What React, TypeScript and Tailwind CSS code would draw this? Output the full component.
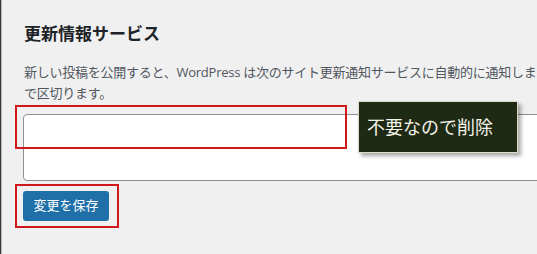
import React from "react";

export default function App() {
  const font = {
    fontFamily: '"Segoe UI", "Open Sans", "Noto Sans CJK JP", sans-serif',
  };
  return (
    <div
      className="relative w-[537px] h-[254px] overflow-hidden bg-[#f0f0f1] border-l border-[#3a3a3a]"
      style={font}
    >
      <div className="h-full border-l border-[#b8b8b8] pl-[22px] pt-[22px] flex flex-col items-start">
        <h2 className="h-[24px] leading-[24px] text-[17px] font-bold text-[#1d2327] whitespace-nowrap">
          更新情報サービス
        </h2>
        <div className="mt-[16px] text-[13px] leading-[21px] text-[#50575e] tracking-[-0.25px]">
          <p className="whitespace-nowrap">
            新しい投稿を公開すると、WordPress は次のサイト更新通知サービスに自動的に通知します。詳しくはドキュメンテーションの更新通知サービスを参照してください。複数の URL を入力する場合は改行
          </p>
          <p className="whitespace-nowrap">で区切ります。</p>
        </div>
        <div className="mt-[10px] h-[67px] w-[540px] -ml-[1px] bg-white border border-[#8c8f94] rounded-[4px]" />
        <button className="mt-[10px] -ml-[1px] h-[30px] w-[86px] rounded-[3px] bg-[#1f6fa8] text-white text-[13px] flex items-center justify-center">
          変更を保存
        </button>
      </div>

      {/* annotation overlays */}
      <div className="absolute left-[14px] top-[105px] w-[332px] h-[44px] border-2 border-[#d0171b]" />
      <div className="absolute left-[14px] top-[184px] w-[104px] h-[44px] border-2 border-[#d0171b]" />
      <div className="absolute left-[357px] top-[101px] w-[160px] h-[52px] bg-[#1f2a14] border border-[#d8dcc8] shadow-[3px_3px_4px_rgba(0,0,0,0.35)] flex items-center pl-[8px]">
        <span className="text-[18px] text-[#f4f4ea] whitespace-nowrap">不要なので削除</span>
      </div>
    </div>
  );
}
